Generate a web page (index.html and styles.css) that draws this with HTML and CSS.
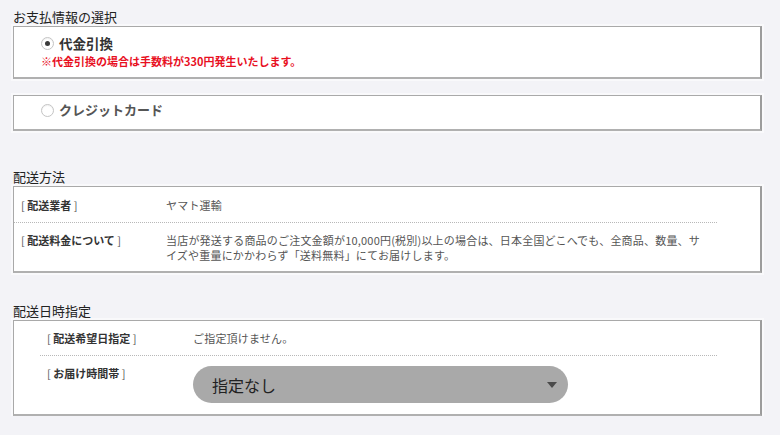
FILE: index.html
```html
<!DOCTYPE html>
<html lang="ja">
<head>
<meta charset="utf-8">
<title>お支払・配送</title>
<link rel="stylesheet" href="styles.css">
</head>
<body>
<div class="page">
  <section class="section section-pay">
    <h2 class="heading">お支払情報の選択</h2>
    <div class="box box-cod">
      <label class="option">
        <span class="radio radio-on"><span class="radio-dot"></span></span>
        <span class="option-label option-label-on">代金引換</span>
      </label>
      <p class="note">※代金引換の場合は手数料が330円発生いたします。</p>
    </div>
    <div class="box box-card">
      <label class="option">
        <span class="radio"></span>
        <span class="option-label">クレジットカード</span>
      </label>
    </div>
  </section>

  <section class="section section-ship">
    <h2 class="heading">配送方法</h2>
    <div class="box">
      <div class="table table-ship">
        <div class="row">
          <div class="cell-label"><span class="br">[</span> <b>配送業者</b> <span class="br">]</span></div>
          <div class="cell-value">ヤマト運輸</div>
        </div>
        <div class="row row-last">
          <div class="cell-label"><span class="br">[</span> <b>配送料金について</b> <span class="br">]</span></div>
          <div class="cell-value">当店が発送する商品のご注文金額が10,000円(税別)以上の場合は、日本全国どこへでも、全商品、数量、サイズや重量にかかわらず「送料無料」にてお届けします。</div>
        </div>
      </div>
    </div>
  </section>

  <section class="section section-date">
    <h2 class="heading">配送日時指定</h2>
    <div class="box">
      <div class="table table-date">
        <div class="row">
          <div class="cell-label"><span class="br">[</span> <b>配送希望日指定</b> <span class="br">]</span></div>
          <div class="cell-value">ご指定頂けません。</div>
        </div>
        <div class="row row-last row-select">
          <div class="cell-label"><span class="br">[</span> <b>お届け時間帯</b> <span class="br">]</span></div>
          <div class="cell-value">
            <div class="select">
              <span class="select-text">指定なし</span>
              <svg class="select-arrow" width="10" height="6" viewBox="0 0 10 6"><path d="M0 0 H10 L5 6 Z" fill="#4a4a4a"/></svg>
            </div>
          </div>
        </div>
      </div>
    </div>
  </section>
</div>
</body>
</html>
```

FILE: styles.css
```css
html, body {
  margin: 0;
  padding: 0;
  background: #f3f3f7;
}
body {
  font-family: "Noto Sans CJK JP", "Noto Sans", sans-serif;
  color: #222;
}
.page {
  width: 749px;
  padding: 8px 18px 0 13px;
}
.section { margin: 0; }
.section-ship { margin-top: 37px; }
.section-date { margin-top: 29px; }
.heading {
  margin: 0;
  font-size: 13px;
  font-weight: 400;
  line-height: 18px;
  color: #222;
}
.box {
  background: #fff;
  border-top: 1px solid #a9a9a9;
  border-left: 1px solid #a9a9a9;
  border-right: 2px solid #9c9c9c;
  border-bottom: 2px solid #b0b0b0;
  box-shadow: 0 0 0 2px #f9f9fb;
}
.box-cod {
  padding: 7px 0 8px 27px;
}
.box-card {
  margin-top: 16px;
  padding: 5px 0 10px 27px;
}
.option {
  display: flex;
  align-items: center;
  height: 18px;
}
.radio {
  width: 11px;
  height: 11px;
  border: 1px solid #c4c4c4;
  border-radius: 50%;
  background: #fff;
  display: flex;
  align-items: center;
  justify-content: center;
  box-shadow: inset 0 1px 1px rgba(0,0,0,0.06);
}
.radio-dot {
  width: 5px;
  height: 5px;
  border-radius: 50%;
  background: #3a3a3a;
}
.option-label {
  margin-left: 5px;
  font-size: 13px;
  font-weight: 700;
  line-height: 18px;
  color: #555;
}
.option-label-on {
  color: #333;
  font-size: 13.5px;
}
.note {
  margin: 1px 0 0 0;
  font-size: 11px;
  font-weight: 700;
  line-height: 16px;
  color: #e8101f;
}
.table-ship {
  margin-right: 43px;
}
.table-date {
  margin-left: 26px;
  margin-right: 43px;
}
.row {
  display: grid;
  grid-template-columns: 152px 1fr;
  padding: 11px 0 9px;
  border-bottom: 1px dotted #b8b8b8;
  font-size: 11px;
  line-height: 15px;
}
.table-date .row {
  grid-template-columns: 153px 1fr;
  padding: 10px 0 9px;
}
.row-last {
  border-bottom: none;
  padding: 10px 0 8px;
}
.table-date .row-select {
  padding: 10px 0 11px;
}
.cell-label {
  padding-left: 7px;
  color: #333;
  white-space: nowrap;
}
.cell-label b {
  font-weight: 700;
}
.br {
  color: #555;
  font-weight: 400;
}
.cell-value {
  color: #555;
  padding-right: 13px;
  letter-spacing: 0.2px;
}
.select {
  width: 375px;
  height: 37px;
  border-radius: 19px;
  background: #a9a9a9;
  display: flex;
  align-items: center;
  justify-content: space-between;
  padding: 0 11px 0 19px;
  box-sizing: border-box;
}
.select-text {
  font-size: 16px;
  line-height: 20px;
  color: #222;
  letter-spacing: 0;
}
.select-arrow {
  display: block;
  margin-top: 1px;
}
```
